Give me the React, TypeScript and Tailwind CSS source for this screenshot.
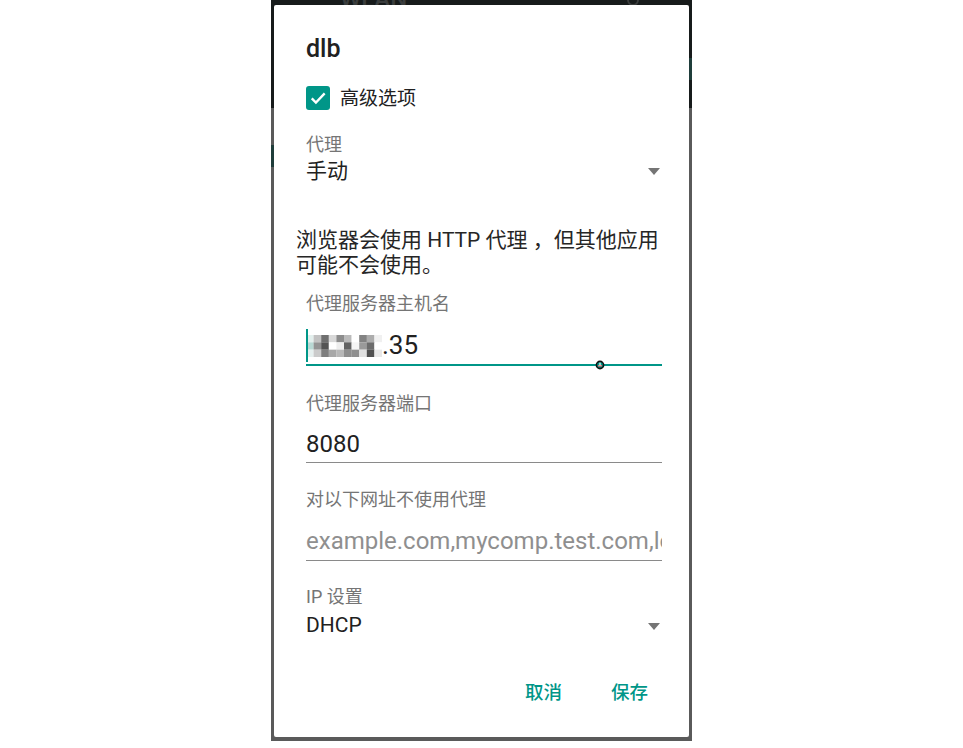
import React from 'react';

const FONT = "font-['Roboto','Noto_Sans_CJK_SC',sans-serif]";

// pixelated (censored) part of the host name
const MOSAIC: string[][] = [
    ['#e3efed', '#c2c2c2', '#6f6f6f', '#d8d8d8', '#8c8c8c', '#bababa', '#ffffff', '#828282', '#acacac', '#f0f0f0'],
    ['#b9d9d4', '#949494', '#545454', '#ffffff', '#eeeeee', '#626262', '#f5f5f5', '#9a9a9a', '#6c6c6c', '#ffffff'],
    ['#e6f0ef', '#cbcbcb', '#7e7e7e', '#a8a8a8', '#b8b8b8', '#8f8f8f', '#909090', '#e0e0e0', '#505050', '#e8e8e8'],
];

function DropArrow() {
    return (
        <svg width="12" height="7" viewBox="0 0 12 7" className="shrink-0">
            <path d="M0 0 L12 0 L6 7 Z" fill="#757575" />
        </svg>
    );
}

function FieldLabel({ children }: { children: React.ReactNode }) {
    return <div className="h-[23px] flex items-center text-[18px] text-[#757575]">{children}</div>;
}

export default function App() {
    return (
        <div className={`min-h-screen bg-white flex justify-center ${FONT}`}>
            <div className="relative w-[421px] h-[741px] flex flex-col overflow-hidden">
                {/* screen behind the dialog */}
                <div className="h-[108px] bg-[#171b1b] relative">
                    <span className="absolute left-[69px] top-[-19px] text-[24px] font-medium text-[#3a3d3d]">WLAN</span>
                    <div className="absolute left-[356px] top-[-6px] w-[12px] h-[12px] rounded-full border-2 border-[#3a3d3d]" />
                    <div className="absolute right-[0px] top-[58px] w-[3px] h-[22px] bg-[#1f3d3a]" />
                </div>
                <div className="flex-1 bg-[#5a5a5a] relative">
                    <div className="absolute left-0 top-[37px] w-[3px] h-[22px] bg-[#1f3d3a]" />
                </div>

                {/* dialog */}
                <div className="absolute left-[3px] right-[3px] top-[5px] bottom-[4px] bg-white rounded-[2px] pl-[32px] pr-[27px] pt-[32px] flex flex-col text-[#212121]">
                    <div className="h-[24px] flex items-center text-[25px] font-medium">dlb</div>

                    <div className="mt-[25px] h-[24px] flex items-center gap-[10px]">
                        <div className="w-[24px] h-[24px] rounded-[3px] bg-[#009688] flex items-center justify-center">
                            <svg width="20" height="20" viewBox="0 0 24 24">
                                <path d="M4.5 12.5 L9.5 17.5 L20 6.5" fill="none" stroke="white" strokeWidth="2.8" />
                            </svg>
                        </div>
                        <span className="text-[19px] translate-y-[1px]">高级选项</span>
                    </div>

                    <div className="mt-[23px] h-[22px] flex items-center text-[18px] text-[#757575]">代理</div>
                    <div className="mt-[4px] h-[25px] flex items-center justify-between pr-[2px]">
                        <span className="text-[21px]">手动</span>
                        <DropArrow />
                    </div>

                    <div className="mt-[44px] -ml-[10px] text-[21px] leading-[25px] whitespace-nowrap text-[#262626]">
                        浏览器会使用 HTTP 代理 ，但其他应用
                        <br />
                        可能不会使用。
                    </div>

                    <div className="mt-[14px]">
                        <FieldLabel>代理服务器主机名</FieldLabel>
                    </div>
                    <div className="mt-[15px] h-[31px] flex items-center relative">
                        <div className="absolute left-0 top-[-1px] w-[2px] h-[33px] bg-[#009688]" />
                        <svg width="76" height="22" viewBox="0 0 76 22" className="shrink-0">
                            {MOSAIC.map((row, r) =>
                                row.map((c, i) => (
                                    <rect key={`${r}-${i}`} x={i * 7.6} y={r * 7.33} width="7.7" height="7.4" fill={c} />
                                ))
                            )}
                        </svg>
                        <span className="text-[26px]">.35</span>
                    </div>
                    <div className="mt-[3px] h-[2px] bg-[#009688] relative">
                        <svg width="10" height="10" viewBox="0 0 10 10" className="absolute left-[289px] top-[-4px]">
                            <circle cx="5" cy="5" r="3.6" fill="#009688" stroke="#111" strokeWidth="1.6" />
                            <rect x="3" y="5" width="4" height="1.5" fill="#e57373" />
                            <rect x="4.4" y="2.6" width="1.2" height="3" fill="#fff" />
                        </svg>
                    </div>

                    <div className="mt-[26px]">
                        <FieldLabel>代理服务器端口</FieldLabel>
                    </div>
                    <div className="mt-[13px] h-[32px] flex items-center text-[24px]">8080</div>
                    <div className="mt-[2px] h-[1px] bg-[#8a8a8a]" />

                    <div className="mt-[25px]">
                        <FieldLabel>对以下网址不使用代理</FieldLabel>
                    </div>
                    <div className="mt-[14px] h-[32px] flex items-center text-[24px] text-[#8f8f8f] whitespace-nowrap overflow-hidden">
                        example.com,mycomp.test.com,localhost
                    </div>
                    <div className="mt-[3px] h-[1px] bg-[#8a8a8a]" />

                    <div className="mt-[24px] h-[22px] flex items-center text-[18px] text-[#757575]">IP 设置</div>
                    <div className="mt-[7px] h-[24px] flex items-center justify-between pr-[2px]">
                        <span className="text-[21px]">DHCP</span>
                        <DropArrow />
                    </div>

                    <div className="mt-[44px] h-[24px] flex items-center justify-end gap-[49px] mr-[14px] text-[18.5px] font-medium text-[#009688]">
                        <span>取消</span>
                        <span>保存</span>
                    </div>
                </div>
            </div>
        </div>
    );
}
